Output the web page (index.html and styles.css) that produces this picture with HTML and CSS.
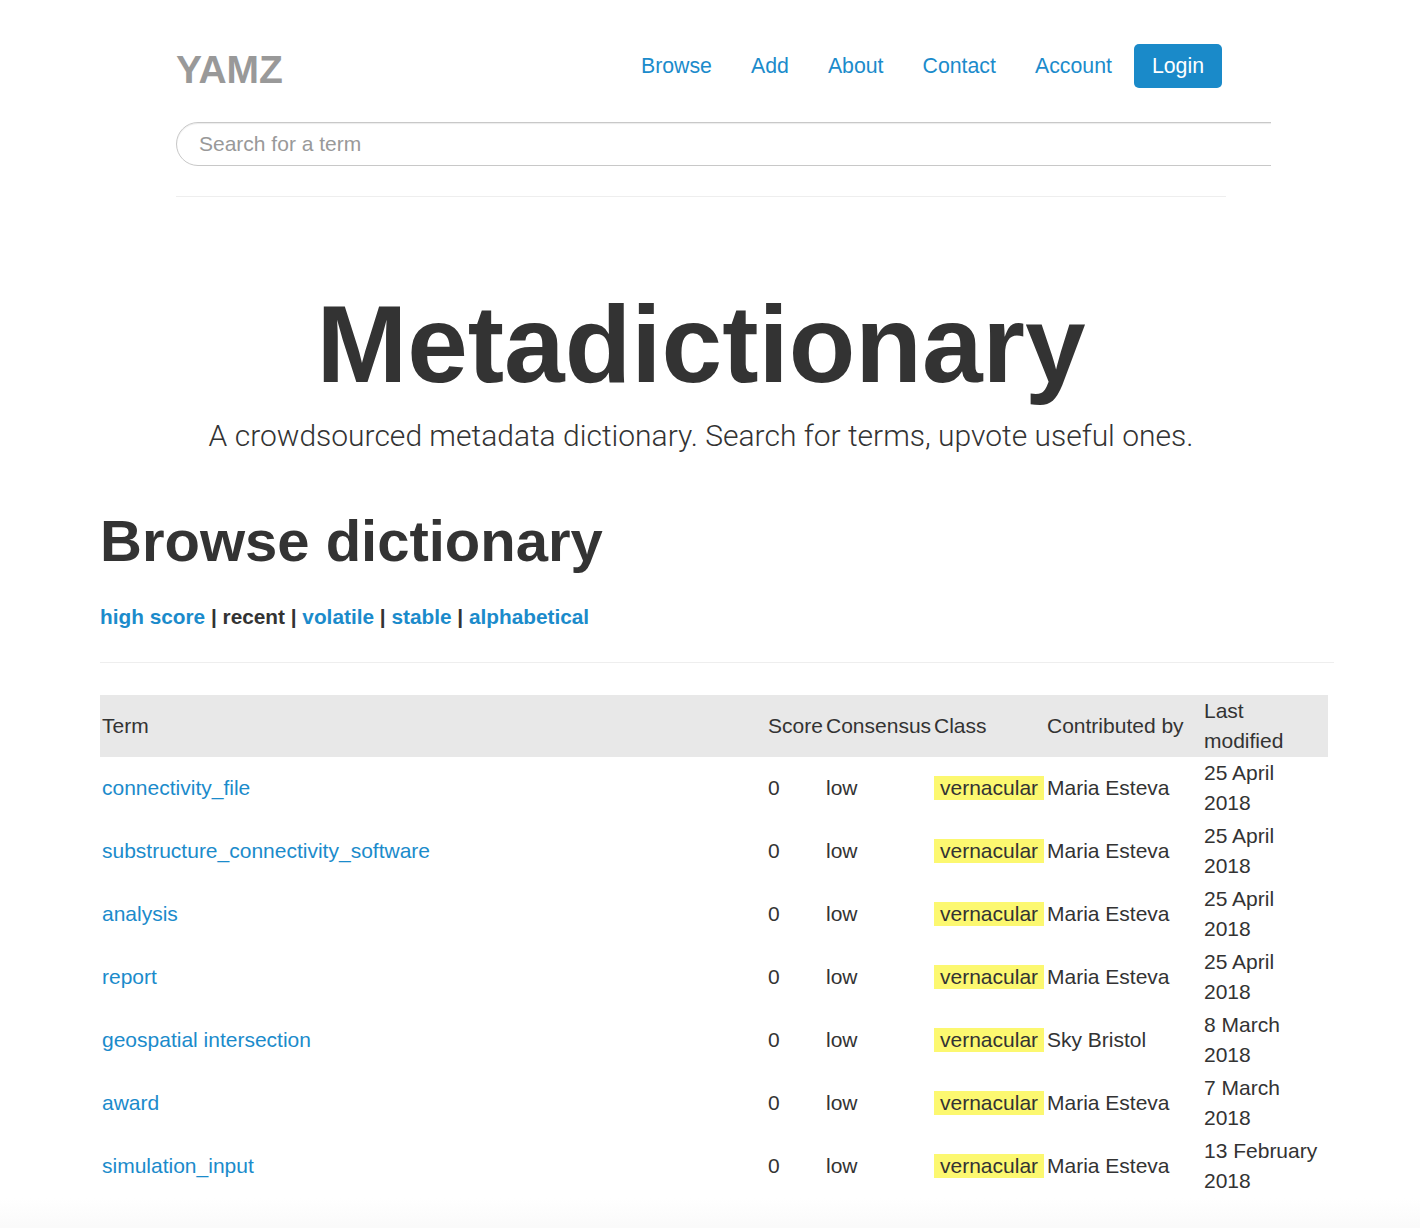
FILE: index.html
```html
<!DOCTYPE html>
<html lang="en">
<head>
<meta charset="utf-8">
<title>YAMZ Metadictionary</title>
<link rel="stylesheet" href="styles.css">
</head>
<body>
<header class="site-header">
  <div class="header-row">
    <a class="logo" href="#">YAMZ</a>
    <nav class="nav">
      <a href="#">Browse</a>
      <a href="#">Add</a>
      <a href="#">About</a>
      <a href="#">Contact</a>
      <a href="#">Account</a>
      <a class="login" href="#">Login</a>
    </nav>
  </div>
  <div class="search-wrap">
    <input class="search" type="text" placeholder="Search for a term">
  </div>
  <hr class="header-rule">
</header>

<section class="hero">
  <h1 class="hero-title">Metadictionary</h1>
  <p class="hero-sub">A crowdsourced metadata dictionary. Search for terms, upvote useful ones.</p>
</section>

<main class="browse">
  <h2 class="browse-title">Browse dictionary</h2>
  <p class="filters"><a href="#">high score</a> | <span class="current">recent</span> | <a href="#">volatile</a> | <a href="#">stable</a> | <a href="#">alphabetical</a></p>
  <hr class="browse-rule">
  <table class="terms">
    <colgroup>
      <col class="c-term"><col class="c-score"><col class="c-cons"><col class="c-class"><col class="c-contrib"><col class="c-date">
    </colgroup>
    <thead>
      <tr><th>Term</th><th>Score</th><th>Consensus</th><th>Class</th><th>Contributed by</th><th>Last modified</th></tr>
    </thead>
    <tbody>
      <tr><td><a href="#">connectivity_file</a></td><td>0</td><td>low</td><td><span class="tag">vernacular</span></td><td>Maria Esteva</td><td>25 April 2018</td></tr>
      <tr><td><a href="#">substructure_connectivity_software</a></td><td>0</td><td>low</td><td><span class="tag">vernacular</span></td><td>Maria Esteva</td><td>25 April 2018</td></tr>
      <tr><td><a href="#">analysis</a></td><td>0</td><td>low</td><td><span class="tag">vernacular</span></td><td>Maria Esteva</td><td>25 April 2018</td></tr>
      <tr><td><a href="#">report</a></td><td>0</td><td>low</td><td><span class="tag">vernacular</span></td><td>Maria Esteva</td><td>25 April 2018</td></tr>
      <tr><td><a href="#">geospatial intersection</a></td><td>0</td><td>low</td><td><span class="tag">vernacular</span></td><td>Sky Bristol</td><td>8 March 2018</td></tr>
      <tr><td><a href="#">award</a></td><td>0</td><td>low</td><td><span class="tag">vernacular</span></td><td>Maria Esteva</td><td>7 March 2018</td></tr>
      <tr><td><a href="#">simulation_input</a></td><td>0</td><td>low</td><td><span class="tag">vernacular</span></td><td>Maria Esteva</td><td>13 February 2018</td></tr>
    </tbody>
  </table>
</main>
<footer class="site-footer"></footer>
</body>
</html>
```

FILE: styles.css
```css
html, body {
  margin: 0;
  padding: 0;
  background: #fff;
}
body {
  font-family: "Liberation Sans", Arial, Helvetica, sans-serif;
  color: #333;
  overflow-x: hidden;
}
a {
  color: #1b8bcb;
  text-decoration: none;
}

/* Header */
.site-header {
  width: 1050px;
  margin-left: 176px;
  padding-top: 44px;
}
.header-row {
  display: flex;
  justify-content: space-between;
  align-items: center;
  height: 44px;
}
.logo {
  color: #999;
  font-weight: bold;
  font-size: 39px;
  letter-spacing: 0;
  padding-top: 7px;
}
.nav {
  display: flex;
  align-items: center;
  gap: 39px;
  font-size: 21.3px;
  margin-right: 4px;
}
.nav .login {
  margin-left: -17px;
  background: #1a8ac9;
  color: #fff;
  border-radius: 5px;
  height: 44px;
  line-height: 44px;
  padding: 0 18px;
}
.search-wrap {
  width: 1095px;
  overflow: hidden;
  margin-top: 34px;
}
.search {
  box-sizing: border-box;
  width: 1160px;
  height: 44px;
  border: 1px solid #c8c8c8;
  border-radius: 22px;
  box-shadow: inset 0 1px 1px rgba(0,0,0,0.08);
  padding: 0 22px;
  font-family: "Liberation Sans", Arial, sans-serif;
  font-size: 21px;
  color: #555;
  outline: none;
  display: block;
}
.search::placeholder {
  color: #999;
}
.header-rule {
  border: 0;
  border-top: 1px solid #eee;
  margin: 30px 0 0;
}

/* Hero */
.hero {
  width: 1050px;
  margin-left: 176px;
  text-align: center;
  padding-top: 93px;
}
.hero-title {
  font-size: 109px;
  font-weight: bold;
  line-height: 1;
  margin: 0;
  color: #333;
}
.hero-sub {
  font-family: Roboto, "Liberation Sans", sans-serif;
  font-weight: 300;
  font-size: 30px;
  line-height: 36px;
  margin: 19px 0 0;
  color: #333;
}

/* Browse */
.browse {
  margin-left: 100px;
  width: 1234px;
  padding-top: 55px;
}
.browse-title {
  font-size: 58px;
  font-weight: bold;
  line-height: 64px;
  margin: 0;
}
.filters {
  font-size: 20.8px;
  font-weight: bold;
  line-height: 28px;
  margin: 30px 0 0;
}
.filters a {
  color: #1b8bcb;
}
.filters .current {
  color: #333;
}
.browse-rule {
  border: 0;
  border-top: 1px solid #eee;
  margin: 31px 0 0;
}
.terms {
  margin-top: 32px;
  width: 1228px;
  table-layout: fixed;
  border-collapse: collapse;
  font-size: 21px;
}
.c-term { width: 666px; }
.c-score { width: 58px; }
.c-cons { width: 108px; }
.c-class { width: 113px; }
.c-contrib { width: 157px; }
.c-date { width: 126px; }
.terms th {
  background: #e8e8e8;
  font-weight: normal;
  text-align: left;
  line-height: 30px;
  padding: 1px 2px;
}
.terms td {
  line-height: 30px;
  padding: 1px 2px 2px;
  vertical-align: middle;
}
.terms thead th:nth-child(2),
.terms thead th:nth-child(3) {
  white-space: nowrap;
}
.tag {
  background: #fcf870;
  padding: 0 6px;
  line-height: 24px;
  display: inline-block;
}
.site-footer {
  height: 40px;
  background: linear-gradient(to bottom, #fff, #f8f8f8);
}
```
